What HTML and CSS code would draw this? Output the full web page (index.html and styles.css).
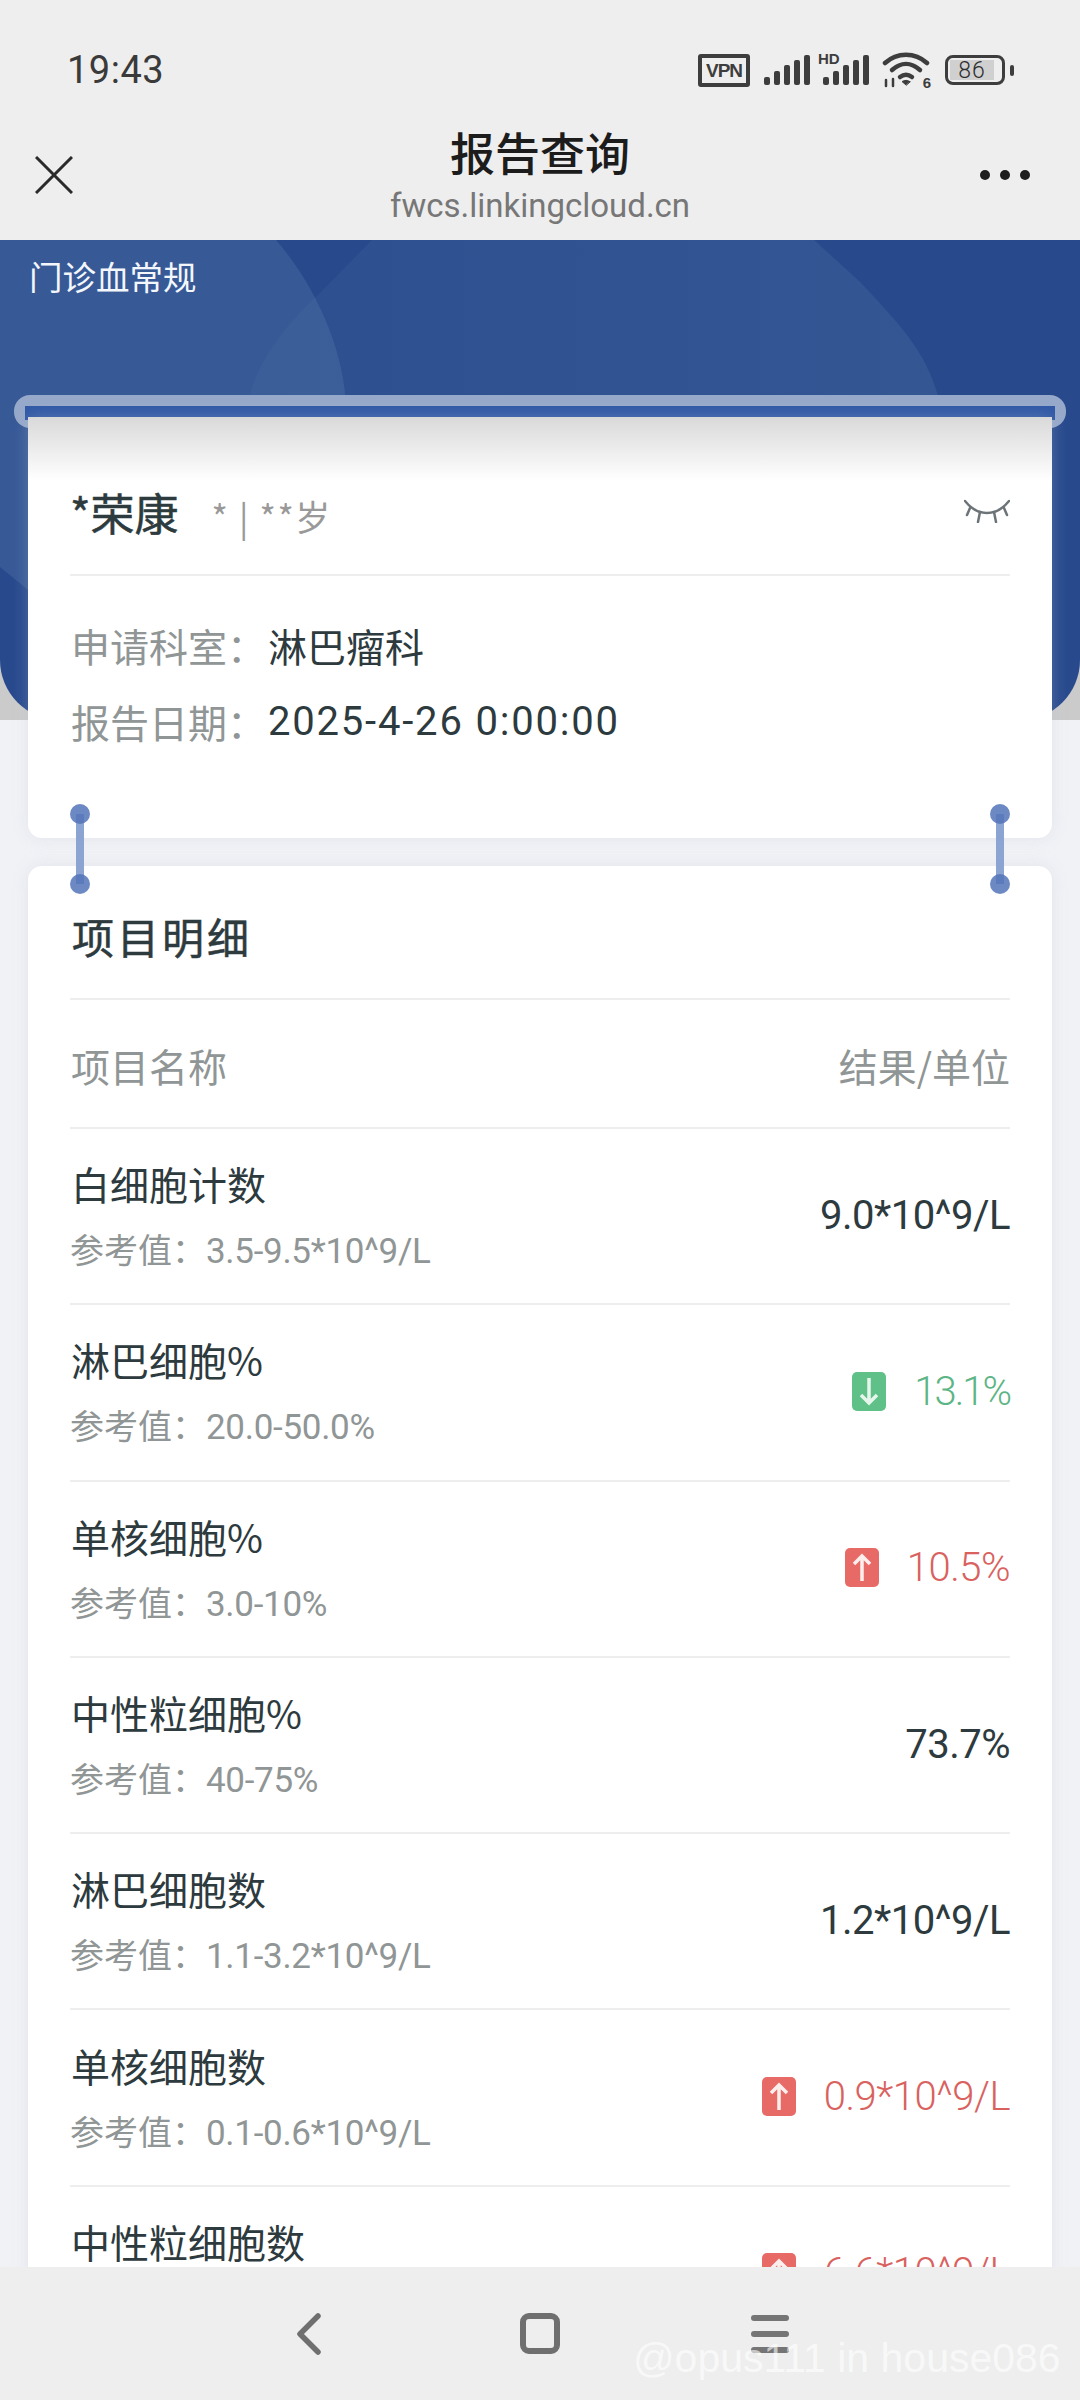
FILE: index.html
```html
<!DOCTYPE html>
<html lang="zh-CN">
<head>
    <meta charset="UTF-8">
    <meta name="viewport" content="width=device-width, initial-scale=1.0">
    <title>报告查询</title>
    <link rel="stylesheet" href="styles.css">
</head>
<body>
    <div class="phone">
        <div class="top">
            <div class="status">
                <div class="time">19:43</div>
                <div class="status-icons">
                    <div class="vpn">VPN</div>
                    <svg class="signal" width="46" height="30" viewBox="0 0 46 30">
                        <rect x="0" y="22" width="6" height="8" rx="2"/>
                        <rect x="10" y="16" width="6" height="14" rx="2"/>
                        <rect x="20" y="10" width="6" height="20" rx="2"/>
                        <rect x="30" y="5" width="6" height="25" rx="2"/>
                        <rect x="40" y="0" width="6" height="30" rx="2"/>
                    </svg>
                    <div class="signal-hd">
                        <span class="hd">HD</span>
                        <svg class="signal" width="46" height="30" viewBox="0 0 46 30">
                            <rect x="0" y="22" width="6" height="8" rx="2"/>
                            <rect x="10" y="16" width="6" height="14" rx="2"/>
                            <rect x="20" y="10" width="6" height="20" rx="2"/>
                            <rect x="30" y="5" width="6" height="25" rx="2"/>
                            <rect x="40" y="0" width="6" height="30" rx="2"/>
                        </svg>
                    </div>
                    <div class="wifi">
                        <svg width="48" height="36" viewBox="0 0 48 36" fill="none" stroke="#3d3d3d" stroke-width="4.500" stroke-linecap="round">
                            <path d="M3 11C15 0 33 0 45 11"/>
                            <path d="M10 18C19 10 29 10 38 18"/>
                            <path d="M18 25C22 22 26 22 30 25"/>
                            <path d="M24 33L20 29.500Q24 27 28 29.500Z" fill="#3d3d3d" stroke-width="1"/>
                            <path d="M4 28V34M11 27V34" stroke-width="2.500"/>
                        </svg>
                        <span class="wifi-six">6</span>
                    </div>
                    <div class="battery">
                        <div class="battery-body">
                            <div class="battery-fill">86</div>
                        </div>
                        <div class="battery-nub"></div>
                    </div>
                </div>
            </div>
            <div class="nav">
                <svg class="nav-close" width="38" height="38" viewBox="0 0 38 38" fill="none" stroke="#2a2a2a" stroke-width="3">
                    <path d="M1 1L37 37M37 1L1 37"/>
                </svg>
                <div class="nav-title">
                    <div class="title">报告查询</div>
                    <div class="url">fwcs.linkingcloud.cn</div>
                </div>
                <div class="nav-more"><span></span><span></span><span></span></div>
            </div>
        </div>

        <div class="scroll">
            <div class="banner">
                <svg class="banner-shapes" width="1080" height="480" viewBox="0 0 1080 480">
                    <defs>
                        <linearGradient id="midfill" x1="0" y1="0" x2="1" y2="0">
                            <stop offset="0" stop-color="#7fa0b8" stop-opacity=".06"/>
                            <stop offset="1" stop-color="#7fa0b8" stop-opacity=".14"/>
                        </linearGradient>
                    </defs>
                    <path d="M0 0H276C315 45 345 110 346 170V350H28L0 327Z" fill="#375996"/>
                    <path d="M372 0L319 54C285 85 250 130 248 170V330H938V156C925 110 900 85 860 42L814 0Z" fill="url(#midfill)"/>
                </svg>
                <div class="banner-title">门诊血常规</div>
            </div>

            <div class="slot"><div class="slot-inner"></div></div>

            <div class="card card-info">
                <div class="person">
                    <div class="person-name">*荣康</div>
                    <div class="person-meta">* | **岁</div>
                    <svg class="eye" width="46" height="24" viewBox="0 0 46 24" fill="none" stroke="#6d7478" stroke-width="2.500" stroke-linecap="round">
                        <path d="M1 2C9 12 16 14 23 14C30 14 37 12 45 2"/>
                        <path d="M6 9L3 16M16 13L14 23M30 13L32 23M40 9L43 16"/>
                    </svg>
                </div>
                <div class="info">
                    <div class="info-row"><span class="info-label">申请科室：</span><span>淋巴瘤科</span></div>
                    <div class="info-row"><span class="info-label">报告日期：</span><span class="date">2025-4-26 0:00:00</span></div>
                </div>
            </div>

            <div class="pin pin-left"></div>
            <div class="pin pin-right"></div>

            <div class="card card-list">
                <div class="list-title">项目明细</div>
                <div class="list-head">
                    <span>项目名称</span>
                    <span>结果/单位</span>
                </div>

                <div class="row">
                    <div>
                        <div class="row-name">白细胞计数</div>
                        <div class="row-ref">参考值：<span class="num">3.5-9.5*10^9/L</span></div>
                    </div>
                    <div class="row-val">9.0*10^9/L</div>
                </div>
                <div class="row">
                    <div>
                        <div class="row-name">淋巴细胞%</div>
                        <div class="row-ref">参考值：<span class="num">20.0-50.0%</span></div>
                    </div>
                    <div class="row-val low">
                        <svg class="badge" width="34" height="39" viewBox="0 0 34 39"><rect width="34" height="39" rx="5" fill="#5fc088"/><path d="M17 6V30M9 23L17 31L25 23" fill="none" stroke="#e6f6ec" stroke-width="3.500"/></svg>
                        13.1%
                    </div>
                </div>
                <div class="row">
                    <div>
                        <div class="row-name">单核细胞%</div>
                        <div class="row-ref">参考值：<span class="num">3.0-10%</span></div>
                    </div>
                    <div class="row-val high">
                        <svg class="badge" width="34" height="39" viewBox="0 0 34 39"><rect width="34" height="39" rx="5" fill="#e86a66"/><path d="M17 33V9M9 16L17 8L25 16" fill="none" stroke="#fdeeee" stroke-width="3.500"/></svg>
                        10.5%
                    </div>
                </div>
                <div class="row">
                    <div>
                        <div class="row-name">中性粒细胞%</div>
                        <div class="row-ref">参考值：<span class="num">40-75%</span></div>
                    </div>
                    <div class="row-val">73.7%</div>
                </div>
                <div class="row">
                    <div>
                        <div class="row-name">淋巴细胞数</div>
                        <div class="row-ref">参考值：<span class="num">1.1-3.2*10^9/L</span></div>
                    </div>
                    <div class="row-val">1.2*10^9/L</div>
                </div>
                <div class="row">
                    <div>
                        <div class="row-name">单核细胞数</div>
                        <div class="row-ref">参考值：<span class="num">0.1-0.6*10^9/L</span></div>
                    </div>
                    <div class="row-val high">
                        <svg class="badge" width="34" height="39" viewBox="0 0 34 39"><rect width="34" height="39" rx="5" fill="#e86a66"/><path d="M17 33V9M9 16L17 8L25 16" fill="none" stroke="#fdeeee" stroke-width="3.500"/></svg>
                        0.9*10^9/L
                    </div>
                </div>
                <div class="row">
                    <div>
                        <div class="row-name">中性粒细胞数</div>
                        <div class="row-ref">参考值：<span class="num">1.8-6.3*10^9/L</span></div>
                    </div>
                    <div class="row-val high">
                        <svg class="badge" width="34" height="39" viewBox="0 0 34 39"><rect width="34" height="39" rx="5" fill="#e86a66"/><path d="M17 33V9M9 16L17 8L25 16" fill="none" stroke="#fdeeee" stroke-width="3.500"/></svg>
                        6.6*10^9/L
                    </div>
                </div>
            </div>
        </div>

        <div class="bottom">
            <svg width="27" height="42" viewBox="0 0 27 42" fill="none" stroke="#6f6f6f" stroke-width="5.500" stroke-linecap="round" stroke-linejoin="round">
                <path d="M23 3L5 21L23 39"/>
            </svg>
            <div class="bottom-square"></div>
            <div class="bottom-menu"><span></span><span></span><span></span></div>
            <div class="watermark">@opus111 in house086</div>
        </div>
    </div>
</body>
</html>
```

FILE: styles.css
```css
* {
    box-sizing: border-box;
}
body {
    margin: 0;
    font-family: "Noto Sans CJK SC", "Noto Sans", sans-serif;
    color: #2d3a3e;
}
.phone {
    display: flex;
    flex-direction: column;
    width: 1080px;
    height: 2400px;
    overflow: hidden;
}

/* top bars */
.top {
    height: 240px;
    flex-shrink: 0;
    padding-top: 35px;
    background-color: #eeeeee;
}
.status {
    display: flex;
    justify-content: space-between;
    align-items: center;
    height: 70px;
    padding: 0 67px;
}
.time {
    font-family: Roboto, sans-serif;
    font-size: 38px;
    letter-spacing: 0.5px;
    color: #3a3a3a;
}
.status-icons {
    display: flex;
    align-items: center;
    margin-right: -1px;
}
.vpn {
    width: 52px;
    height: 33px;
    border: 4px solid #3d3d3d;
    border-radius: 3px;
    font-family: "Liberation Sans", sans-serif;
    font-size: 19px;
    font-weight: bold;
    letter-spacing: -1px;
    line-height: 25px;
    text-align: center;
    color: #3d3d3d;
}
.signal {
    display: block;
    fill: #3d3d3d;
}
.vpn + .signal {
    margin-left: 14px;
}
.signal-hd {
    position: relative;
    margin-left: 13px;
}
.hd {
    position: absolute;
    left: -5px;
    top: -4px;
    font-family: "Liberation Sans", sans-serif;
    font-size: 15px;
    font-weight: bold;
    line-height: 15px;
    color: #3d3d3d;
}
.wifi {
    position: relative;
    width: 48px;
    height: 36px;
    margin-left: 13px;
}
.wifi svg {
    display: block;
}
.wifi-six {
    position: absolute;
    right: -1px;
    bottom: -3px;
    font-family: "Liberation Sans", sans-serif;
    font-size: 15px;
    font-weight: bold;
    line-height: 16px;
    color: #3d3d3d;
}
.battery {
    display: flex;
    align-items: center;
    margin-left: 15px;
}
.battery-body {
    width: 60px;
    height: 30px;
    padding: 2px;
    border: 3px solid #3d3d3d;
    border-radius: 8px;
}
.battery-fill {
    width: 44px;
    height: 20px;
    background-color: #d0d0d0;
    font-family: Roboto, sans-serif;
    font-size: 23px;
    font-weight: 300;
    letter-spacing: 1px;
    line-height: 21px;
    text-align: center;
    color: #2e2e2e;
}
.battery-nub {
    width: 4px;
    height: 11px;
    margin-left: 5px;
    border-radius: 2px;
    background-color: #3d3d3d;
}
.nav {
    display: grid;
    grid-template-columns: 1fr auto 1fr;
    align-items: center;
    height: 135px;
    padding: 5px 35px 0;
}
.nav-title {
    margin-top: 1px;
    text-align: center;
}
.title {
    height: 60px;
    font-size: 45px;
    font-weight: 500;
    line-height: 60px;
    color: #1c1c1c;
}
.url {
    height: 48px;
    font-family: Roboto, sans-serif;
    font-size: 33px;
    line-height: 48px;
    color: #777777;
}
.nav-more {
    display: flex;
    justify-content: flex-end;
    gap: 10px;
    margin-right: 15px;
}
.nav-more span {
    width: 10px;
    height: 10px;
    border-radius: 50%;
    background-color: #1e1e1e;
}

/* page */
.scroll {
    flex: 1;
    position: relative;
    overflow: hidden;
    background-color: #f1f2f6;
}
.banner {
    position: relative;
    height: 480px;
    overflow: hidden;
    border-radius: 0 0 60px 60px;
    background: #284a8d;
    box-shadow: 0 0 0 60px #cbcbcb;
    clip-path: inset(0);
}
.banner-shapes {
    position: absolute;
    left: 0;
    top: 0;
}
.banner-title {
    position: relative;
    padding: 13px 0 0 29px;
    font-size: 33.500px;
    line-height: 46px;
    color: #f3f6fb;
}
.slot {
    position: absolute;
    left: 14px;
    top: 155px;
    width: 1052px;
    height: 33px;
    padding: 11px 11px 0;
    border-radius: 16px;
    background-color: #97a9ca;
}
.slot-inner {
    height: 14px;
    background-color: #3058a5;
}
.card {
    position: relative;
    margin: 0 28px;
    background-color: #ffffff;
    box-shadow: 0 0 16px rgba(190, 198, 215, 0.3);
}
.card-info {
    height: 421px;
    margin-top: -303px;
    padding: 0 42px;
    border-radius: 0 0 14px 14px;
    background: linear-gradient(to bottom, #d9d9da, #ffffff 64px);
}
.person {
    display: flex;
    align-items: center;
    height: 159px;
    padding-top: 32px;
    border-bottom: 2px solid #eeeeee;
}
.person-name {
    font-size: 44px;
    -webkit-text-stroke: 0.5px #2d3a3e;
}
.person-meta {
    flex: 1;
    margin-left: 33px;
    padding-top: 7px;
    font-size: 35px;
    letter-spacing: 1.600px;
    color: #999999;
}
.eye {
    margin-bottom: 2px;
}
.info {
    padding-top: 32px;
}
.info-row {
    display: flex;
    height: 76px;
    margin-left: 1px;
    font-size: 39px;
    line-height: 74px;
}
.info-label {
    width: 197px;
    color: #909595;
}
.date {
    font-family: Roboto, sans-serif;
    font-size: 40px;
    letter-spacing: 1.800px;
    line-height: 76px;
}
.num {
    font-family: Roboto, sans-serif;
    font-size: 35px;
    letter-spacing: -0.3px;
}
.pin {
    position: absolute;
    top: 574px;
    width: 8px;
    height: 70px;
    margin-left: -4px;
    background-color: #8ba4d1;
}
.pin::before,
.pin::after {
    content: "";
    position: absolute;
    left: -6px;
    width: 20px;
    height: 20px;
    border-radius: 50%;
    background-color: rgba(84, 116, 186, 0.85);
}
.pin::before {
    top: -10px;
}
.pin::after {
    bottom: -10px;
}
.pin-left {
    left: 80px;
    z-index: 2;
}
.pin-right {
    left: 1000px;
    z-index: 2;
}
.card-list {
    margin-top: 28px;
    padding: 0 42px;
    border-radius: 14px 14px 0 0;
}
.list-title {
    height: 134px;
    padding: 42px 0 0 2px;
    font-size: 42px;
    line-height: 56px;
    letter-spacing: 3px;
    -webkit-text-stroke: 0.5px #2d3a3e;
    border-bottom: 2px solid #eeeeee;
}
.list-head {
    display: flex;
    justify-content: space-between;
    height: 129px;
    padding-left: 1px;
    font-size: 39px;
    line-height: 130px;
    color: #909595;
    border-bottom: 2px solid #eeeeee;
}
.row {
    display: flex;
    justify-content: space-between;
    align-items: center;
    height: 176.300px;
    padding-bottom: 2px;
    border-bottom: 2px solid #eeeeee;
}
.row-name {
    margin-left: 1px;
    font-size: 39px;
    line-height: 60px;
}
.row-ref {
    font-size: 34px;
    line-height: 50px;
    margin-top: 11px;
    color: #909595;
}
.row-val {
    display: flex;
    align-items: center;
    font-family: Roboto, sans-serif;
    font-size: 40px;
    letter-spacing: -0.5px;
}
.badge {
    margin-right: 28px;
}
.low {
    font-weight: 300;
    letter-spacing: -2px;
    color: #5cb585;
}
.high {
    font-weight: 300;
    color: #d9625f;
}

/* bottom bar */
.bottom {
    position: relative;
    display: flex;
    align-items: center;
    justify-content: space-between;
    flex-shrink: 0;
    height: 133px;
    padding: 0 291px 0 295px;
    background-color: #eeeeee;
}
.bottom-square {
    width: 40px;
    height: 41px;
    margin-left: 6px;
    border: 6px solid #6f6f6f;
    border-radius: 9px;
}
.bottom-menu {
    display: flex;
    flex-direction: column;
    gap: 10px;
    width: 38px;
}
.bottom-menu span {
    height: 6px;
    border-radius: 3px;
    background-color: #757575;
}
.watermark {
    position: absolute;
    left: 633px;
    top: 67px;
    font-family: "Liberation Sans", sans-serif;
    font-size: 41px;
    line-height: 48px;
    color: rgba(255, 255, 255, 0.6);
}
```
